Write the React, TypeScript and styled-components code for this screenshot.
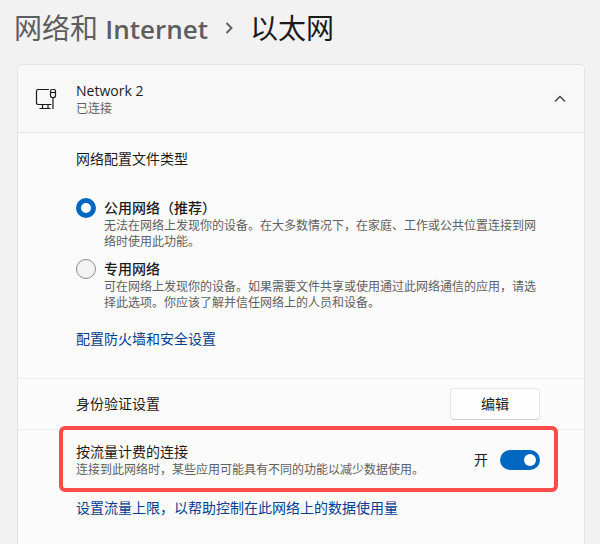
import React, { useId, useState } from "react";
import styled, { createGlobalStyle } from "styled-components";

const GlobalStyle = createGlobalStyle`
  *, *::before, *::after { box-sizing: border-box; }
  body {
    margin: 0;
    background: #f2f2f2;
    color: #1b1b1b;
    font-family: "Open Sans", "Noto Sans CJK SC", sans-serif;
    font-size: 14px;
    line-height: 20px;
  }
`;

const Page = styled.main`
  display: flex;
  flex-direction: column;
  min-height: 100vh;
  padding: 10px 15px 0 17px;
`;

const Breadcrumb = styled.nav`
  display: flex;
  align-items: center;
  gap: 15px;
  margin: 0 0 18px -3px;
  font-size: 28px;
  line-height: 36px;
  white-space: nowrap;
`;

const ParentLink = styled.a`
  color: #5e5e5e;
  text-decoration: none;
`;

const Latin = styled.span`
  font-size: 26px;
  font-weight: 600;
  line-height: 1;
`;

const PageTitle = styled.h1`
  margin: 0;
  font: inherit;
`;

const Card = styled.section`
  flex: 1;
  border: 1px solid #e3e3e3;
  border-bottom: 0;
  border-radius: 5px 5px 0 0;
  background: #fbfbfb;
`;

const CardHeader = styled.button`
  display: flex;
  align-items: center;
  width: 100%;
  height: 68px;
  padding: 0 16px;
  border: 0;
  border-bottom: 1px solid #e5e5e5;
  border-radius: 4px 4px 0 0;
  background: #f8f8f8;
  color: inherit;
  font: inherit;
  text-align: left;
`;

const HeaderText = styled.span`
  flex: 1;
  display: flex;
  flex-direction: column;
  margin-left: 18px;
`;

const Caption = styled.span`
  display: block;
  color: #606060;
  font-size: 12px;
  line-height: 16px;
`;

const ProfileSection = styled.fieldset`
  margin: 0;
  padding: 16px 44px 29px 58px;
  border: 0;
  border-bottom: 1px solid #eeeeee;
`;

const Legend = styled.legend`
  float: left;
  width: 100%;
  padding: 0;
  margin-bottom: 29px;
`;

const Options = styled.div`
  clear: both;
  display: flex;
  flex-direction: column;
  gap: 9px;
  margin-bottom: 18px;
`;

const Option = styled.label`
  display: flex;
  align-items: flex-start;
  gap: 8px;
`;

const Radio = styled.input`
  appearance: none;
  flex: none;
  width: 20px;
  height: 20px;
  margin: 0;
  border: 1px solid #8a8a8a;
  border-radius: 50%;
  background: #f3f3f3;

  &:checked {
    border: 5px solid #0067c0;
    background: #ffffff;
  }
`;

const OptionTitle = styled.span`
  display: block;
  font-weight: 500;
`;

const TextLink = styled.a`
  display: block;
  width: fit-content;
  color: #003e92;
  text-decoration: none;
`;

const SettingRow = styled.div`
  display: flex;
  align-items: center;
  justify-content: space-between;
  padding: 9px 44px 9px 58px;
  border-bottom: 1px solid #eeeeee;
`;

const EditButton = styled.button`
  width: 90px;
  height: 32px;
  padding: 0;
  border: 1px solid #e5e5e5;
  border-bottom-color: #cccccc;
  border-radius: 4px;
  background: #fefefe;
  color: inherit;
  font: inherit;
`;

const MeteredRow = styled.div`
  position: relative;
  display: flex;
  align-items: center;
  justify-content: space-between;
  padding: 12px 44px 11px 58px;
`;

const Highlight = styled.div`
  position: absolute;
  inset: -4px 26px -3px 41px;
  border: 4px solid #f94b48;
  border-radius: 6px;
  pointer-events: none;
`;

const SwitchLabel = styled.label`
  display: flex;
  align-items: center;
  gap: 12px;
`;

const Switch = styled.input`
  appearance: none;
  display: flex;
  align-items: center;
  width: 40px;
  height: 20px;
  margin: 0;
  padding: 0 4px;
  border-radius: 10px;
  background: #8a8a8a;

  &::before {
    content: "";
    width: 12px;
    height: 12px;
    border-radius: 50%;
    background: #ffffff;
  }

  &:checked {
    justify-content: flex-end;
    background: #0067c0;
  }
`;

const LinkRow = styled.div`
  padding: 9px 44px 26px 58px;
`;

function EthernetIcon() {
  return (
    <svg width="24" height="24" viewBox="0 0 24 24" fill="none" stroke="#1b1b1b" strokeWidth="1.2" aria-hidden="true">
      <path d="M14.5 2.5H4.2a1.7 1.7 0 0 0-1.7 1.7v11.6a1.7 1.7 0 0 0 1.7 1.7h12.8" strokeLinecap="round" />
      <path d="M5.5 21.5h11M8.5 17.5v4M14 17.5v4" />
      <path d="M18 2.5h2a1.5 1.5 0 0 1 1.5 1.5v4.5a2 2 0 0 1-2 2h-1a2 2 0 0 1-2-2V4a1.5 1.5 0 0 1 1.5-1.5z" />
      <path d="M16.5 5.5h5" />
      <path d="M19 10.5v11.5" />
    </svg>
  );
}

function ChevronRight() {
  return (
    <svg width="12" height="16" viewBox="0 0 12 16" fill="none" stroke="#5e5e5e" strokeWidth="1.9" aria-hidden="true">
      <path d="M3.5 3l5 5-5 5" />
    </svg>
  );
}

function ChevronUp() {
  return (
    <svg width="16" height="16" viewBox="0 0 16 16" fill="none" stroke="#3f3f3f" strokeWidth="1.3" aria-hidden="true">
      <path d="M3 10.5l5-5 5 5" />
    </svg>
  );
}

const profiles = [
  {
    id: "public",
    title: "公用网络（推荐）",
    text: "无法在网络上发现你的设备。在大多数情况下，在家庭、工作或公共位置连接到网络时使用此功能。",
  },
  {
    id: "private",
    title: "专用网络",
    text: "可在网络上发现你的设备。如果需要文件共享或使用通过此网络通信的应用，请选择此选项。你应该了解并信任网络上的人员和设备。",
  },
];

export default function App() {
  const [profile, setProfile] = useState("public");
  const [metered, setMetered] = useState(true);
  const [open, setOpen] = useState(true);
  const titleId = useId();

  return (
    <>
      <GlobalStyle />
      <Page lang="zh-CN">
        <Breadcrumb>
          <ParentLink href="#network">
            网络和 <Latin>Internet</Latin>
          </ParentLink>
          <ChevronRight />
          <PageTitle>以太网</PageTitle>
        </Breadcrumb>
        <Card>
          <CardHeader type="button" aria-expanded={open} onClick={() => setOpen(!open)}>
            <EthernetIcon />
            <HeaderText>
              <span>Network 2</span>
              <Caption>已连接</Caption>
            </HeaderText>
            <ChevronUp />
          </CardHeader>
          {open && (
            <>
              <ProfileSection>
                <Legend>网络配置文件类型</Legend>
                <Options>
                  {profiles.map((item) => (
                    <Option key={item.id}>
                      <Radio
                        type="radio"
                        name="profile"
                        checked={profile === item.id}
                        onChange={() => setProfile(item.id)}
                      />
                      <span>
                        <OptionTitle>{item.title}</OptionTitle>
                        <Caption>{item.text}</Caption>
                      </span>
                    </Option>
                  ))}
                </Options>
                <TextLink href="#firewall">配置防火墙和安全设置</TextLink>
              </ProfileSection>
              <SettingRow>
                <span>身份验证设置</span>
                <EditButton type="button">编辑</EditButton>
              </SettingRow>
              <MeteredRow>
                <div>
                  <span id={titleId}>按流量计费的连接</span>
                  <Caption>连接到此网络时，某些应用可能具有不同的功能以减少数据使用。</Caption>
                </div>
                <SwitchLabel>
                  {metered ? "开" : "关"}
                  <Switch
                    type="checkbox"
                    role="switch"
                    aria-labelledby={titleId}
                    checked={metered}
                    onChange={() => setMetered(!metered)}
                  />
                </SwitchLabel>
                <Highlight />
              </MeteredRow>
              <LinkRow>
                <TextLink href="#limit">设置流量上限，以帮助控制在此网络上的数据使用量</TextLink>
              </LinkRow>
            </>
          )}
        </Card>
      </Page>
    </>
  );
}
